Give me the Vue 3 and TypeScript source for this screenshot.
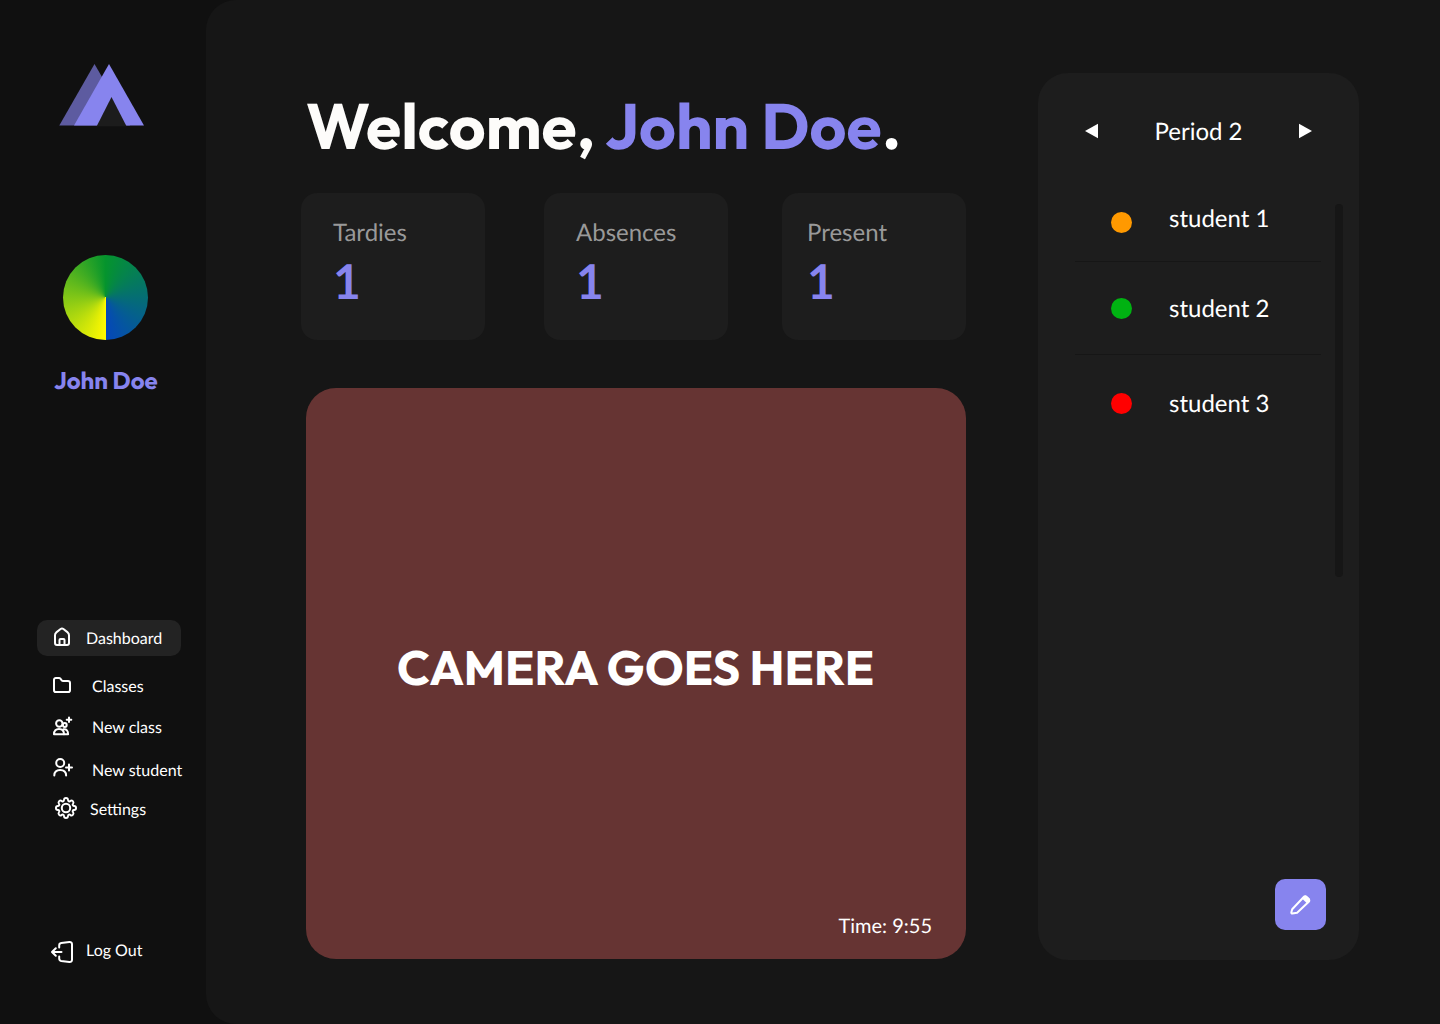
<script setup lang="ts">
interface Stat {
  label: string
  value: number
  variant?: string
}

interface Student {
  name: string
  status: 'late' | 'present' | 'absent'
}

const stats: Stat[] = [
  { label: 'Tardies', value: 1 },
  { label: 'Absences', value: 1 },
  { label: 'Present', value: 1, variant: 'narrow' },
]

const students: Student[] = [
  { name: 'student 1', status: 'late' },
  { name: 'student 2', status: 'present' },
  { name: 'student 3', status: 'absent' },
]
</script>

<template>
  <div class="app">
    <aside class="sidebar">
      <svg class="logo" width="86" height="63" viewBox="0 0 86 63">
        <path d="M35.5 0 71 61.500H.3Z" fill="#8784ee" opacity=".65" />
        <path d="M50 0 85 61.500H15Z" fill="#8784ee" />
        <path d="M52.5 33 67.5 62.200H37.7Z" fill="#1c1c1c" />
      </svg>
      <div class="avatar"></div>
      <div class="user"><span>John Doe</span></div>

      <nav class="nav">
        <a class="item dashboard">
          <svg width="18" height="20" viewBox="0 0 18 20">
            <path d="M2 8.2C2 7 2.4 6.2 3.3 5.4L7.6 2a2.2 2.2 0 0 1 2.8 0l4.3 3.4c.9.8 1.3 1.6 1.3 2.8V16a2 2 0 0 1-2 2H4a2 2 0 0 1-2-2Z" />
            <path d="M6.5 18v-5a1 1 0 0 1 1-1h3a1 1 0 0 1 1 1v5" />
          </svg>
          <span>Dashboard</span>
        </a>
        <a class="item classes">
          <svg width="20" height="18" viewBox="0 0 20 18">
            <path d="M2 3.8A1.8 1.8 0 0 1 3.800 2H7c.6 0 1 .2 1.400 .7L9.700 4.300c.4 .5 .8 .7 1.400 .7H16A2 2 0 0 1 18 7v7.200A1.800 1.800 0 0 1 16.200 16H3.800A1.800 1.800 0 0 1 2 14.200Z" />
          </svg>
          <span>Classes</span>
        </a>
        <a class="item new-class">
          <svg width="22" height="22" viewBox="0 0 22 22">
            <circle cx="7.300" cy="7.500" r="3.200" />
            <circle cx="12.800" cy="9" r="1.900" />
            <path d="M2 18.300c0-3.600 2-5.300 5-5.300s5 1.700 5 5.300Z" />
            <path d="M11.500 13.300c3-.5 4.600 1.600 4.600 5H12" />
            <path d="M17 1.500v4.600M14.700 3.800h4.600" />
          </svg>
          <span>New class</span>
        </a>
        <a class="item new-student">
          <svg width="22" height="22" viewBox="0 0 22 22">
            <circle cx="8.200" cy="6" r="4" />
            <path d="M2.300 18.600c0-3.700 2.500-5.600 5.900-5.600s5.900 1.900 5.900 5.600" />
            <path d="M17 7.500v6M14 10.500h6" />
          </svg>
          <span>New student</span>
        </a>
        <a class="item settings">
          <svg width="24" height="24" viewBox="0 0 24 24">
            <circle cx="12" cy="12" r="4.200" />
            <path transform="translate(.6 .6) scale(.95)" d="M9.900 3.500a2.100 2.100 0 0 1 4.200 0 1.400 1.400 0 0 0 2.500 1 2.100 2.100 0 0 1 2.900 2.900 1.400 1.400 0 0 0 1 2.500 2.100 2.100 0 0 1 0 4.200 1.400 1.400 0 0 0-1 2.500 2.100 2.100 0 0 1-2.900 2.900 1.400 1.400 0 0 0-2.500 1 2.100 2.100 0 0 1-4.200 0 1.400 1.400 0 0 0-2.500-1 2.100 2.100 0 0 1-2.900-2.900 1.400 1.400 0 0 0-1-2.500 2.100 2.100 0 0 1 0-4.200 1.400 1.400 0 0 0 1-2.500 2.100 2.100 0 0 1 2.900-2.900 1.400 1.400 0 0 0 2.500-1Z" />
          </svg>
          <span>Settings</span>
        </a>
        <a class="item logout">
          <svg width="24" height="24" viewBox="0 0 24 24">
            <path d="M9.200 7.500V5.400c0-1.300 .8-2.100 2-2.300l8.200-1.100c1.600-.2 2.600 .8 2.600 2.300v15.400c0 1.500-1 2.500-2.600 2.300l-8.200-1.100c-1.200-.2-2-1-2-2.300v-2.100" />
            <path d="M11.500 12H2.200M5.800 8.200 2 12l3.800 3.800" />
          </svg>
          <span>Log Out</span>
        </a>
      </nav>
    </aside>

    <main class="main">
      <section class="content">
        <h1 class="welcome"><span class="hello">Welcome,</span><span class="name">John Doe</span><span class="dot">.</span></h1>
        <div class="stats">
          <article v-for="stat in stats" :key="stat.label" class="stat" :class="stat.variant">
            <div class="label">{{ stat.label }}</div>
            <div class="value">{{ stat.value }}</div>
          </article>
        </div>
        <div class="camera">
          <div class="camera-title">CAMERA GOES HERE</div>
          <div class="time">Time: 9:55</div>
        </div>
      </section>

      <section class="panel">
        <header class="period">
          <svg width="14" height="16" viewBox="0 0 14 16"><path d="M0 8 13 .7v14.600Z" fill="#fff" /></svg>
          <span>Period 2</span>
          <svg width="14" height="16" viewBox="0 0 14 16"><path d="M13 8 0 .7v14.600Z" fill="#fff" /></svg>
        </header>
        <div class="roster">
          <ul class="students">
            <li v-for="student in students" :key="student.name" :class="student.status">
              <i class="status"></i>
              <span>{{ student.name }}</span>
            </li>
          </ul>
          <div class="scrollbar"></div>
        </div>
        <button class="edit" aria-label="Edit">
          <svg width="24" height="24" viewBox="0 0 24 24">
            <path d="M3.200 17.200 14.500 5.200a2.200 2.200 0 0 1 3.100 0l1.900 1.800a2.200 2.200 0 0 1 0 3.100L8.100 20.700 3.300 21.600a.9.9 0 0 1-1-1Z" fill="none" stroke="#fff" stroke-width="2" stroke-linejoin="round" />
            <path d="m12.800 6.200 2.700-2.300a2 2 0 0 1 2.500 .1l2.600 2.600a2 2 0 0 1 .1 2.500l-2.300 2.700Z" fill="#fff" />
          </svg>
        </button>
      </section>
    </main>
  </div>
</template>

<style>
body {
  margin: 0;
  background: #101010;
}
</style>

<style scoped>
* {
  box-sizing: border-box;
}

.app {
  display: flex;
  width: 1440px;
  height: 1024px;
  overflow: hidden;
  background: #101010;
  color: #fff;
  font-family: Lato, Carlito, sans-serif;
  text-rendering: geometricPrecision;
}

.sidebar {
  display: flex;
  flex-direction: column;
  width: 206px;
  flex: none;
}

.logo {
  margin: 64px 0 0 59px;
}

.avatar {
  width: 85px;
  height: 85px;
  margin: 128px 0 0 63px;
  border-radius: 50%;
  background: conic-gradient(from 180deg, #fff900 0%, #05942d 50%, #0547ba 100%);
}

.user {
  height: 30px;
  margin: 26px 0 0 54px;
  color: #8784ee;
  font: 700 24px/30px Outfit, Lato, sans-serif;
  white-space: nowrap;
}

.nav {
  display: flex;
  flex-direction: column;
  margin-top: 224px;
}

.item {
  display: flex;
  align-items: center;
  height: 36px;
  margin-left: 37px;
  font-size: 16px;
  line-height: 20px;
  white-space: nowrap;
}

.item span {
  padding-top: 2px;
}

.item svg {
  flex: none;
  fill: none;
  stroke: #fff;
  stroke-width: 2;
  stroke-linecap: round;
  stroke-linejoin: round;
}

.dashboard {
  width: 144px;
  padding-left: 16px;
  gap: 15px;
  border-radius: 10px;
  background: #232323;
}

.dashboard svg {
  margin-top: -2px;
}

.classes {
  margin-top: 12px;
  padding-left: 15px;
  gap: 20px;
}

.classes svg {
  margin-top: -2px;
}

.new-class {
  margin-top: 5px;
  padding-left: 15px;
  gap: 18px;
}

.new-student {
  margin-top: 7px;
  padding-left: 15px;
  gap: 18px;
}

.new-student svg {
  margin-top: -4px;
}

.settings {
  margin-top: 3px;
  padding-left: 17px;
  gap: 12px;
}

.settings svg {
  margin-top: -2px;
}

.logout {
  margin-top: 105px;
  padding-left: 13px;
  gap: 12px;
}

.logout svg {
  margin-top: 3px;
}

.main {
  display: flex;
  flex: 1;
  gap: 72px;
  padding-left: 95px;
  border-radius: 30px 0 0 30px;
  background: #161616;
}

.content {
  width: 665px;
  padding-top: 86px;
}

.welcome {
  display: flex;
  height: 80px;
  margin: 0;
  padding-left: 5px;
  color: #fdfcfa;
  font: 700 64px/80px Outfit, Lato, sans-serif;
  white-space: nowrap;
}

.hello {
  width: 299px;
}

.name {
  width: 277px;
  color: #8784ee;
}

.dot {
  color: #fff;
}

.stats {
  display: grid;
  grid-template-columns: 184px 184px 184px;
  column-gap: 59px;
  margin-top: 27px;
}

.stat {
  height: 147px;
  padding: 25px 0 0 32px;
  border-radius: 16px;
  background: #1d1d1d;
}

.stat.narrow {
  margin: 0 5px 0 -5px;
  width: 184px;
  padding-left: 25px;
}

.label {
  color: #999;
  font-size: 24px;
  line-height: 30px;
}

.value {
  margin-top: 4px;
  color: #8784ee;
  font-size: 48px;
  font-weight: 700;
  line-height: 60px;
}

.camera {
  display: flex;
  flex-direction: column;
  justify-content: space-between;
  width: 660px;
  height: 571px;
  margin: 48px 0 0 5px;
  padding: 250px 34px 20px 0;
  border-radius: 30px;
  background: #663433;
}

.camera-title {
  padding-left: 91px;
  font: 700 48px/60px Outfit, Lato, sans-serif;
  white-space: nowrap;
}

.time {
  align-self: flex-end;
  font-size: 20px;
  line-height: 25px;
}

.panel {
  display: flex;
  flex-direction: column;
  width: 321px;
  height: 887px;
  margin-top: 73px;
  border-radius: 30px;
  background: #1d1d1d;
}

.period {
  display: flex;
  align-items: center;
  justify-content: space-between;
  height: 30px;
  margin: 43px 46px 0 47px;
  font-size: 24px;
  line-height: 30px;
}

.period span {
  padding-top: 2px;
  margin-right: 1px;
}

.period svg {
  margin-top: -1px;
}

.roster {
  display: flex;
  gap: 14px;
  margin: 58px 16px 0 37px;
}

.students {
  width: 246px;
  margin: 0;
  padding: 0;
  list-style: none;
}

.students li {
  display: flex;
  gap: 37px;
  height: 93px;
  padding: 0 0 0 36px;
  border-bottom: 1px solid #161616;
  font-size: 24px;
  line-height: 30px;
}

.students .late {
  height: 58px;
}

.students .present {
  padding-top: 32px;
}

.students .absent {
  padding-top: 34px;
  border-bottom: 0;
}

.status {
  width: 21px;
  height: 21px;
  margin-top: 4px;
  border-radius: 50%;
  background: #ff9900;
}

.late .status {
  margin-top: 8px;
}

.present .status {
  background: #00b212;
}

.absent .status {
  background: #ff0000;
}

.scrollbar {
  width: 8px;
  height: 373px;
  border-radius: 4px;
  background: #161616;
}

.edit {
  display: flex;
  align-items: center;
  justify-content: center;
  align-self: flex-end;
  width: 51px;
  height: 51px;
  margin: auto 33px 30px 0;
  padding: 0 0 2px;
  border: 0;
  border-radius: 10px;
  background: #8784ee;
}
</style>
